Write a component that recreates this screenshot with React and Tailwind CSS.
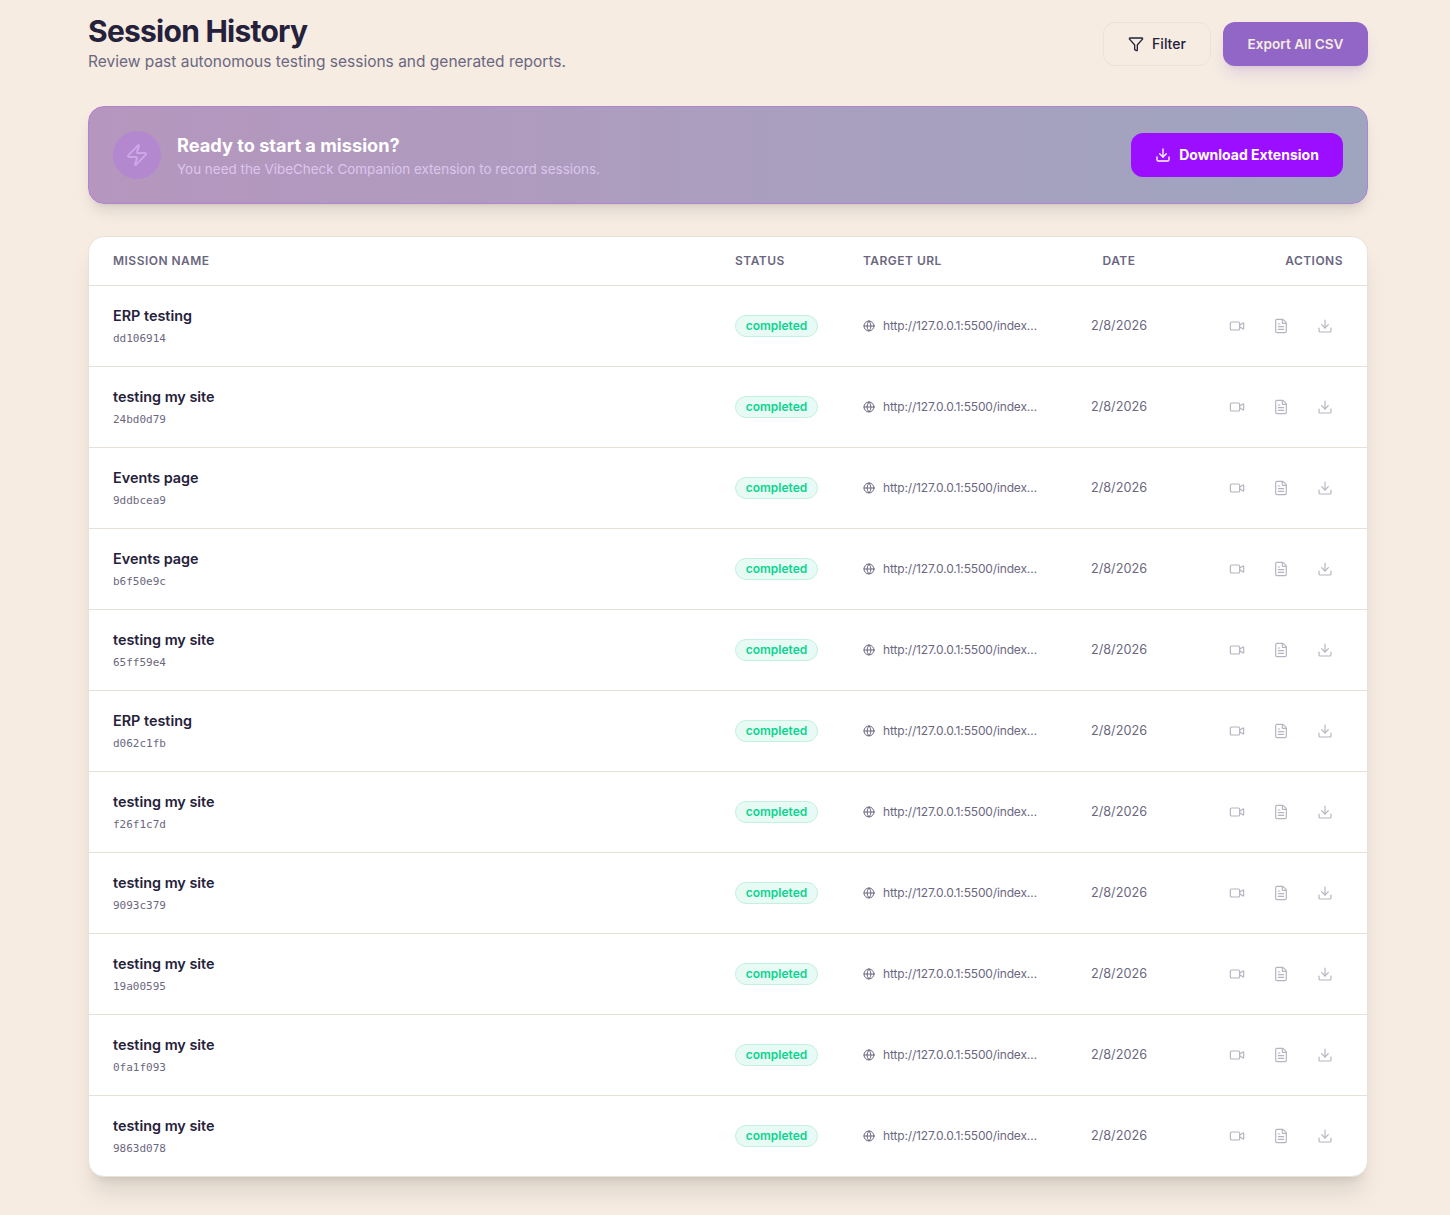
import { Download, FileText, Filter, Globe, Video, Zap } from 'lucide-react'

const SESSIONS = [
  { name: 'ERP testing', id: 'dd106914' },
  { name: 'testing my site', id: '24bd0d79' },
  { name: 'Events page', id: '9ddbcea9' },
  { name: 'Events page', id: 'b6f50e9c' },
  { name: 'testing my site', id: '65ff59e4' },
  { name: 'ERP testing', id: 'd062c1fb' },
  { name: 'testing my site', id: 'f26f1c7d' },
  { name: 'testing my site', id: '9093c379' },
  { name: 'testing my site', id: '19a00595' },
  { name: 'testing my site', id: '0fa1f093' },
  { name: 'testing my site', id: '9863d078' },
]

const gridClass = 'grid grid-cols-[622px_128px_228px_104px_1fr] items-center'

function SessionRow({ session, last }) {
  return (
    <div className={`${gridClass} ${last ? 'h-[80px]' : 'h-[81px] border-b border-[#e6e1d6]'}`}>
      <div className="pl-6">
        <p className="text-[14.4px] leading-5 font-semibold text-[#25213b]">{session.name}</p>
        <p className="mt-[6px] font-['DejaVu_Sans_Mono','Liberation_Mono',monospace] text-[11px] leading-[14px] text-[#6b6780]">
          {session.id}
        </p>
      </div>
      <div className="flex pl-6">
        <span className="flex h-[22px] w-[83px] items-center justify-center rounded-full border border-[#c3f1e0] bg-[#e8faf4] text-xs font-semibold text-[#0bd48f]">
          completed
        </span>
      </div>
      <div className="flex items-center gap-2 pl-6 text-xs text-[#6b6780]">
        <Globe className="h-3 w-3 shrink-0" />
        <span className="w-[155px] truncate tracking-[-0.15px]">http://127.0.0.1:5500/index.html</span>
      </div>
      <div className="text-center text-[12.7px] leading-4 text-[#6b6780]">2/8/2026</div>
      <div className="flex items-center justify-end gap-2 pr-6 text-[#b5b4c1]">
        <button type="button" className="p-[10px]">
          <Video className="h-4 w-4" strokeWidth={1.75} />
        </button>
        <button type="button" className="p-[10px]">
          <FileText className="h-4 w-4" strokeWidth={1.75} />
        </button>
        <button type="button" className="p-[10px]">
          <Download className="h-4 w-4" strokeWidth={1.75} />
        </button>
      </div>
    </div>
  )
}

export default function App() {
  return (
    <div className="h-[1215px] overflow-hidden bg-[#f6ece2] pr-[82px] pl-[88px] font-['Inter',sans-serif]">
      <header className="flex h-[66px] items-start justify-between pt-[13px]">
        <div>
          <h1 className="text-3xl leading-9 font-bold tracking-tight text-[#25213b]">Session History</h1>
          <p className="mt-[2px] text-[15.5px] leading-[22px] text-[#6b6780]">
            Review past autonomous testing sessions and generated reports.
          </p>
        </div>
        <div className="mt-[9px] flex gap-3">
          <button
            type="button"
            className="flex h-11 w-[108px] items-center justify-center gap-2 rounded-xl border border-[#ebe3d8] text-sm font-medium text-[#25213b]"
          >
            <Filter className="h-4 w-4" />
            Filter
          </button>
          <button
            type="button"
            className="h-11 w-[145px] rounded-xl bg-[#9166c6] text-[13.6px] font-semibold text-[#f6ece2] shadow-lg shadow-[#9166c6]/20"
          >
            Export All CSV
          </button>
        </div>
      </header>

      <section className="mt-10 flex h-[98px] items-center justify-between rounded-2xl border border-[#b084d0] bg-gradient-to-r from-[#b696be] to-[#9ea5bf] px-6 shadow-lg shadow-black/10">
        <div className="flex items-center gap-4">
          <div className="flex h-12 w-12 items-center justify-center rounded-full bg-[#b388cf]">
            <Zap className="h-6 w-6 text-[#cda6e8]" strokeWidth={2} />
          </div>
          <div>
            <h2 className="mt-px text-[18.2px] leading-6 font-bold text-white">Ready to start a mission?</h2>
            <p className="mt-[2px] text-[13.45px] leading-5 text-[#dcc6ee]">
              You need the VibeCheck Companion extension to record sessions.
            </p>
          </div>
        </div>
        <button
          type="button"
          className="flex h-11 w-[212px] items-center justify-center gap-2 rounded-xl bg-[#9b0eff] text-sm font-bold text-white"
        >
          <Download className="h-4 w-4" />
          Download Extension
        </button>
      </section>

      <section className="mt-8 overflow-hidden rounded-2xl border border-[#e9e2d8] bg-white shadow-xl shadow-black/10">
        <div className={`${gridClass} h-[49px] border-b border-[#e6e1d6] text-xs font-semibold tracking-[0.04em] text-[#6b6780]`}>
          <div className="pl-6">MISSION NAME</div>
          <div className="pl-6">STATUS</div>
          <div className="pl-6">TARGET URL</div>
          <div className="text-center">DATE</div>
          <div className="pr-6 text-right">ACTIONS</div>
        </div>
        {SESSIONS.map((session, index) => (
          <SessionRow key={session.id} session={session} last={index === SESSIONS.length - 1} />
        ))}
      </section>
    </div>
  )
}
